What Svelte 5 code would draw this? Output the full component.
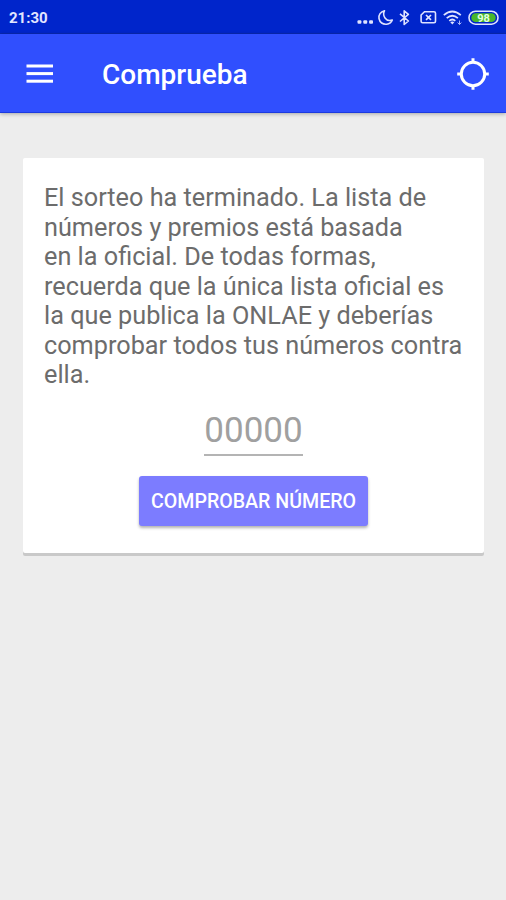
<script lang="ts">
	const time = '21:30';
	const battery = 98;
	const lines = [
		'El sorteo ha terminado. La lista de',
		'números y premios está basada',
		'en la oficial. De todas formas,',
		'recuerda que la única lista oficial es',
		'la que publica la ONLAE y deberías',
		'comprobar todos tus números contra',
		'ella.'
	];

	let ticket = $state('');
</script>

<div class="screen">
	<div class="status-bar">
		<span class="time">{time}</span>
		<svg class="status-icons" viewBox="0 0 148 34" fill="none" stroke="#dfe3ff">
			<!-- More notifications -->
			<g fill="#dfe3ff" stroke="none">
				<rect x="7.5" y="20.2" width="3.9" height="3.6" rx="1" />
				<rect x="13.3" y="20.2" width="3.9" height="3.6" rx="1" />
				<rect x="19.1" y="20.2" width="3.9" height="3.6" rx="1" />
			</g>
			<!-- Do not disturb -->
			<path
				d="M34.5,10.7 C30.5,11.6 28.4,15 29,18.5 C29.7,22.4 33,24.7 36.7,24.2 C39.5,23.8 41.5,22.2 42.3,20 C39.5,21 36.6,20.2 35,18 C33.4,15.8 33.4,12.8 34.5,10.7 Z"
				stroke-width="1.6"
				stroke-linejoin="round"
			/>
			<!-- Bluetooth -->
			<path
				d="M50,13.8 L58.4,21 L54.2,24.5 V10.8 L58.4,14.3 L50,21.5"
				stroke-width="1.6"
				stroke-linejoin="round"
			/>
			<!-- No SIM -->
			<path
				d="M74.5,11.7 H84 Q85.5,11.7 85.5,13.2 V21.3 Q85.5,22.8 84,22.8 H72.6 Q71.1,22.8 71.1,21.3 V15 Z"
				stroke-width="1.6"
			/>
			<path d="M76,15 L81,19.8 M81,15 L76,19.8" stroke-width="1.7" />
			<!-- Wi-Fi -->
			<path
				d="M93.8,15.2 Q102.3,7.8 110.8,15.2 M96.7,18.1 Q102.3,13.4 107.9,18.1 M99.3,20.8 Q102.3,18.2 105.3,20.8"
				stroke-width="1.7"
			/>
			<path d="M100.3,22.2 Q102.3,20.8 104.3,22.2 L102.3,24.5 Z" fill="#dfe3ff" stroke="none" />
			<path d="M109.5,20.5 V24.5 M107.6,22.6 L109.5,24.5 L111.4,22.6" stroke="#a9b6ff" stroke-width="1" />
			<!-- Battery -->
			<rect x="119" y="11.2" width="29" height="13" rx="6.5" stroke-width="1.6" />
			<rect x="121.3" y="13.3" width="24.4" height="8.8" rx="4.4" fill="#48b82c" stroke="none" />
			<text x="133.5" y="21.6" text-anchor="middle" fill="#e4ffe0" stroke="none">{battery}</text>
		</svg>
	</div>

	<header class="app-bar">
		<button class="icon-button" aria-label="Menú">
			<svg width="28" height="20" viewBox="0 0 28 20" fill="#fff">
				<rect x="0.5" y="0.5" width="26.5" height="3" />
				<rect x="0.5" y="8.1" width="26.5" height="3" />
				<rect x="0.5" y="15.7" width="26.5" height="3" />
			</svg>
		</button>
		<h1>Comprueba</h1>
		<button class="icon-button" aria-label="Objetivo">
			<svg width="34" height="34" viewBox="0 0 34 34" fill="none" stroke="#fff" stroke-width="3">
				<circle cx="17" cy="17" r="11.7" />
				<path d="M17,1.2 V5.5 M17,28.5 V32.8 M1.2,17 H5.5 M28.5,17 H32.8" />
			</svg>
		</button>
	</header>

	<main class="card">
		<p>
			{#each lines as line}
				<span>{line}</span>
			{/each}
		</p>
		<input bind:value={ticket} placeholder="00000" maxlength="5" inputmode="numeric" aria-label="Número" />
		<button class="check">COMPROBAR NÚMERO</button>
	</main>
</div>

<style>
	:global(body) {
		background: #ededed;
	}

	.screen {
		min-height: 900px;
		background: #ededed;
		font-family: Roboto, sans-serif;
	}

	button {
		border: 0;
		padding: 0;
		font-family: inherit;
		color: #fff;
	}

	.status-bar {
		display: flex;
		align-items: center;
		justify-content: space-between;
		height: 34px;
		box-sizing: border-box;
		padding: 0 8px 0 9px;
		background: #0025cb;
		border-bottom: 1px solid #0827b4;
	}

	.time {
		font-size: 15px;
		font-weight: 700;
		line-height: 34px;
		color: #e3e6ff;
		padding-top: 2px;
	}

	.status-icons {
		width: 148px;
		height: 34px;
		overflow: visible;
	}

	.status-icons text {
		font-size: 11px;
		font-weight: 700;
	}

	.app-bar {
		display: flex;
		align-items: center;
		height: 79px;
		box-sizing: border-box;
		padding: 2px 16px 0 26px;
		background: #304ffe;
		border-bottom: 1px solid #1c3be0;
		box-shadow: 0 1px 4px rgba(0, 0, 0, 0.3);
	}

	.icon-button {
		display: flex;
		background: none;
	}

	h1 {
		flex: 1;
		margin: 0 0 0 48px;
		padding-top: 2px;
		font-size: 28px;
		font-weight: 500;
		line-height: 34px;
		color: #fff;
	}

	.card {
		display: flex;
		flex-direction: column;
		align-items: center;
		height: 395px;
		box-sizing: border-box;
		margin: 45px 22px 0 23px;
		padding: 25px 21px 0;
		background: #fff;
		border-radius: 2px;
		box-shadow: 0 3px 0 #c9c9c9;
	}

	p {
		align-self: stretch;
		margin: 0;
		font-size: 25.25px;
		line-height: 29.55px;
		color: #6c6c6c;
		white-space: nowrap;
	}

	p span {
		display: block;
	}

	input {
		width: 99px;
		height: 47px;
		box-sizing: border-box;
		margin-top: 19px;
		padding: 0 0 1px;
		border: 0;
		border-bottom: 2px solid #b4b4b4;
		border-radius: 0;
		outline: 0;
		background: none;
		font-family: inherit;
		font-size: 35px;
		text-align: center;
		color: #666;
	}

	input::placeholder {
		color: #a0a0a0;
		opacity: 1;
	}

	.check {
		width: 229px;
		height: 50px;
		margin-top: 20px;
		padding-top: 2px;
		border-radius: 3px;
		background: #7c7cff;
		box-shadow: 0 2px 3px rgba(0, 0, 0, 0.3);
		font-size: 19.6px;
		font-weight: 500;
		white-space: nowrap;
	}
</style>
